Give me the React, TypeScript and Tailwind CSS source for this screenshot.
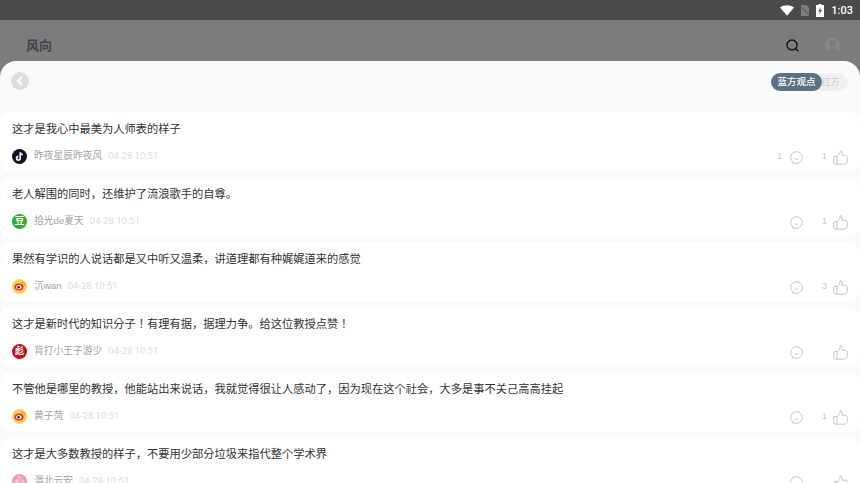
const F = { fontFamily: '"Liberation Sans","Noto Sans CJK KR","Noto Sans CJK SC",sans-serif' };

function Smile() {
  return (
    <svg width="13" height="13" viewBox="0 0 13 13" fill="none" stroke="#bdbdbd" strokeWidth="0.900">
      <path d="M6.500.7c3.200 0 5.800 2.500 5.800 5.800s-2.600 5.800-5.800 5.800c-.8 0-1.500-.1-2.100-.4l-1.700.3.300-1.500C1.600 9.700.7 8.200.7 6.500.7 3.200 3.300.7 6.500.7z" />
      <path d="M4.800 7.200c.3.900.9 1.300 1.700 1.300s1.400-.4 1.700-1.300" />
    </svg>
  );
}

function Thumb() {
  return (
    <svg width="15" height="15" viewBox="0 0 15 15" fill="none" stroke="#bdbdbd" strokeWidth="0.900" strokeLinejoin="round">
      <path d="M.7 7.500c0-.6.400-1 1-1h2.300v7.700H2.500c-1 0-1.800-.8-1.800-1.800z" />
      <path d="M4 6.800 6.300 4.300c.6-.8.800-1.800.9-3.500 1.400-.2 2.100.8 2 2.100l-.3 2.300h3.100c1.300 0 2.300 1 2.300 2.300v3.200c0 2-1.200 3.500-3.200 3.500H4" />
    </svg>
  );
}

function Avatar({ kind }: { kind: string }) {
  if (kind === "tiktok")
    return (
      <div className="w-[15px] h-[15px] rounded-full bg-[#1a1024] flex items-center justify-center">
        <svg width="11" height="11" viewBox="0 0 11 11" fill="none">
          <path d="M6.200 1.500v5.700a1.800 1.800 0 1 1-1.800-1.800" stroke="#ffffff" strokeWidth="1.600" />
          <path d="M6.300 1.500c.2 1.300 1.100 2.100 2.500 2.200" stroke="#ffffff" strokeWidth="1.500" />
        </svg>
      </div>
    );
  if (kind === "douban")
    return (
      <div className="w-[15px] h-[15px] rounded-full bg-[#1fb52d] flex items-center justify-center text-white text-[10px] leading-none font-bold">
        豆
      </div>
    );
  if (kind === "weibo")
    return (
      <div className="w-[15px] h-[15px] rounded-full bg-[#fbcf5c] flex items-center justify-center">
        <svg width="12" height="10" viewBox="0 0 12 10">
          <ellipse cx="5" cy="6" rx="4.600" ry="3.400" fill="#e2342c" />
          <ellipse cx="4.800" cy="6.200" rx="2.600" ry="2.100" fill="#ffffff" />
          <circle cx="4.600" cy="6.300" r="1.300" fill="#222222" />
          <path d="M7.500 1.200c1.800-.3 3.400 1 3.100 3" stroke="#e8862c" strokeWidth="1" fill="none" />
        </svg>
      </div>
    );
  if (kind === "red")
    return (
      <div className="w-[15px] h-[15px] rounded-full bg-[#b81414] flex items-center justify-center text-white text-[9px] leading-none font-bold">
        彪
      </div>
    );
  return (
    <div className="w-[15px] h-[15px] rounded-full bg-[#eba0b4] flex items-center justify-center text-white text-[9px] leading-none">
      心
    </div>
  );
}

const rows = [
  { t: "这才是我心中最美为人师表的样子", a: "tiktok", n: "昨夜星辰昨夜风", c: "1", l: "1" },
  { t: "老人解围的同时，还维护了流浪歌手的自尊。", a: "douban", n: "拾光de夏天", c: "", l: "1" },
  { t: "果然有学识的人说话都是又中听又温柔，讲道理都有种娓娓道来的感觉", a: "weibo", n: "沉wan", c: "", l: "3" },
  { t: "这才是新时代的知识分子！有理有据，据理力争。给这位教授点赞！", a: "red", n: "背打小王子游少", c: "", l: "" },
  { t: "不管他是哪里的教授，他能站出来说话，我就觉得很让人感动了，因为现在这个社会，大多是事不关己高高挂起", a: "weibo", n: "黄子菏", c: "", l: "1" },
  { t: "这才是大多数教授的样子，不要用少部分垃圾来指代整个学术界", a: "pink", n: "渭北云安", c: "", l: "" },
];

export default function App() {
  return (
    <div className="w-[860px] h-[483px] overflow-hidden flex flex-col bg-[#7b7c7c]" style={F}>
      <div className="h-5 shrink-0 bg-[#4b4b4c] flex items-center justify-end pr-[7px] gap-[6px] text-white">
        <svg width="14" height="11" viewBox="0 0 14 11"><path d="M0 2.500C3.800-.6 10.200-.6 14 2.500L7 10.800z" fill="#ffffff" /></svg>
        <svg width="10" height="11" viewBox="0 0 10 11"><path d="M1 0h5.500L9 2.500V11H1z" fill="#7d7d7d" /><path d="M0 1l10 9.500" stroke="#4b4b4c" strokeWidth="1" /></svg>
        <svg width="8" height="13" viewBox="0 0 8 13"><path d="M2.500 0h3v1H8v12H0V1h2.500z" fill="#ffffff" /><path d="M4.700 3 2.300 7.200h1.500L3.300 10.500 5.800 6H4.200z" fill="#4b4b4c" /></svg>
        <span className="text-[11px] leading-none ml-[1px]" style={{ fontFamily: "Roboto, sans-serif", fontWeight: 500 }}>1:03</span>
      </div>
      <div className="h-[41px] shrink-0 bg-[#7b7c7c] flex items-center pl-[26px] pr-[20px]">
        <span className="text-[13px] font-bold text-[#3f4347] mt-[10px]">风向</span>
        <div className="ml-auto flex items-center gap-[25px] mt-[10px]">
          <svg width="15" height="15" viewBox="0 0 15 15" fill="none" stroke="#111111" strokeWidth="1.400">
            <circle cx="7" cy="7" r="5" />
            <path d="M10.800 10.800l2.400 2.400" />
          </svg>
          <div className="w-[15px] h-[15px] rounded-full bg-[#878787] overflow-hidden flex flex-col items-center">
            <div className="w-[7px] h-[7px] rounded-full bg-[#7b7b7b] mt-[2px] shrink-0" />
            <div className="w-[13px] h-[8px] rounded-t-full bg-[#7b7b7b] mt-[1px] shrink-0" />
          </div>
        </div>
      </div>
      <div className="flex-1 min-h-0 bg-[#fafafa] rounded-t-[16px] overflow-hidden flex flex-col">
        <div className="h-[51px] shrink-0 flex items-start justify-between pl-[11px] pr-[12px]">
          <div className="w-[18px] h-[18px] mt-[11px] rounded-full bg-[#dedede] flex items-center justify-center">
            <svg width="8" height="10" viewBox="0 0 8 10" fill="none" stroke="#ffffff" strokeWidth="1.800"><path d="M6 1 2 5l4 4" /></svg>
          </div>
          <div className="mt-[12px] flex items-center h-[18px] rounded-full bg-[#f0f0f0] text-[9.500px] font-medium w-[77px]">
            <span className="h-[18px] w-[51px] rounded-full bg-[#5a7284] text-white flex items-center justify-center shrink-0">蓝方观点</span>
            <span className="text-[#d4d4d4] -ml-[1px]">红方</span>
          </div>
        </div>
        <div className="flex flex-col gap-[5px]">
          {rows.map((r, i) => (
            <div key={i} className="h-[60px] shrink-0 bg-white rounded-[12px] pl-[12px] pr-[12px] pt-[9px] flex flex-col">
              <div className="text-[11.250px] leading-[16px] text-[#333333]">{r.t}</div>
              <div className="flex items-center mt-[11px] h-[16px]">
                <Avatar kind={r.a} />
                <span className="ml-[7px] pt-[1px] text-[9.750px] text-[#a3a3a3]">{r.n}</span>
                <span className="ml-[6px] pt-[1px] text-[9.500px] text-[#dddddd]" style={{ fontFamily: "Roboto, sans-serif" }}>04-28 10:51</span>
                <div className="ml-auto flex items-center text-[9px] text-[#c4c4c4] pt-[2px]">
                  <span className="w-[8px] text-right">{r.c}</span>
                  <span className="ml-[8px]"><Smile /></span>
                  <span className="w-[8px] text-right ml-[16px]">{r.l}</span>
                  <span className="ml-[6px]"><Thumb /></span>
                </div>
              </div>
            </div>
          ))}
        </div>
      </div>
    </div>
  );
}
